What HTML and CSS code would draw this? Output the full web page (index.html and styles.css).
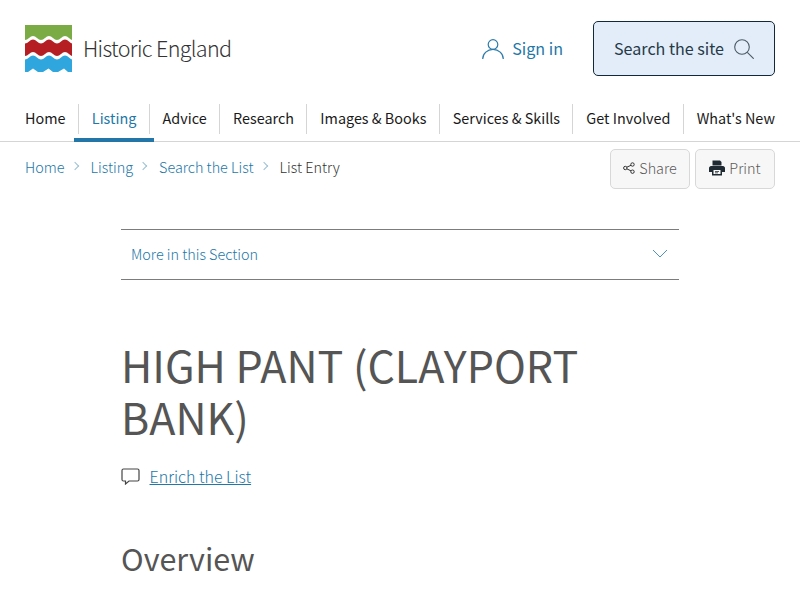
FILE: index.html
```html
<!DOCTYPE html>
<html lang="en">
<head>
<meta charset="utf-8">
<title>HIGH PANT (CLAYPORT BANK) | Historic England</title>
<link rel="stylesheet" href="styles.css">
</head>
<body>
<header class="top">
  <a class="brand" href="#">
    <svg class="logo" viewBox="0 0 47 47" width="47" height="47" aria-hidden="true">
      <path d="M0 0V15q2 0 4-2t4-2 4 2 4 2 4-2 4-2 4 2 4 2 4-2 4-2 4 2 4 2V0Z" fill="#7aab45"/>
      <path d="M0 18.500q2 0 4-2t4-2 4 2 4 2 4-2 4-2 4 2 4 2 4-2 4-2 4 2 4 2V31q-2 0-4-2t-4-2-4 2-4 2-4-2-4-2-4 2-4 2-4-2-4-2-4 2-4 2Z" fill="#b51f24"/>
      <path d="M0 34.500q2 0 4-2t4-2 4 2 4 2 4-2 4-2 4 2 4 2 4-2 4-2 4 2 4 2V47H43L39 43.500 33 47H28L23.500 43.500 18 47H13L8 43.500 3 47H0Z" fill="#2fa6dd"/>
    </svg>
    <span class="brand-name">Historic England</span>
  </a>
  <div class="top-actions">
    <a class="signin" href="#">
      <svg class="user-icon" viewBox="0 0 22 20" width="22" height="20" aria-hidden="true"><circle cx="11" cy="5.500" r="4.800"/><path d="M0.700 20C0.700 14.500 5.500 10.300 11 10.300S21.300 14.500 21.300 20"/></svg>
      <span class="lift">Sign in</span>
    </a>
    <button class="search-btn" type="button">
      <span class="lift">Search the site</span>
      <svg class="search-icon" viewBox="0 0 20 20" width="20" height="20" aria-hidden="true"><circle cx="8" cy="8" r="7.300"/><path d="M13.300 13.300L19.700 19.700"/></svg>
    </button>
  </div>
</header>
<nav class="main-nav">
  <a href="#">Home</a>
  <a class="active" href="#">Listing</a>
  <a href="#">Advice</a>
  <a href="#">Research</a>
  <a href="#">Images &amp; Books</a>
  <a href="#">Services &amp; Skills</a>
  <a href="#">Get Involved</a>
  <a href="#">What's New</a>
</nav>
<div class="crumb-bar">
  <ol class="crumbs">
    <li><a href="#">Home</a></li>
    <li><a href="#">Listing</a></li>
    <li><a href="#">Search the List</a></li>
    <li class="current">List Entry</li>
  </ol>
  <div class="tools">
    <button class="tool" type="button">
      <svg class="share-icon" viewBox="0 0 12 12" width="12" height="12" aria-hidden="true"><circle cx="9.500" cy="2.500" r="1.700"/><circle cx="2.300" cy="6" r="1.700"/><circle cx="9.500" cy="9.700" r="1.700"/><path d="M3.800 5.200L8 3.300M3.800 6.800L8 8.900"/></svg>
      <span class="lift">Share</span>
    </button>
    <button class="tool" type="button">
      <svg class="print-icon" viewBox="0 0 16 16" width="16" height="16" aria-hidden="true"><path d="M3.500 0.500H11L12.500 2V5.500H3.500Z"/><path fill-rule="evenodd" d="M2 6H14C15 6 16 7 16 8V12H13V15.500H3V12H0V8C0 7 1 6 2 6ZM4.500 10V14H11.500V10ZM6 11H10V11.800H6ZM6 12.500H9V13.200H6Z"/></svg>
      <span class="lift">Print</span>
    </button>
  </div>
</div>
<main class="content">
  <button class="section-toggle" type="button">
    <span>More in this Section</span>
    <svg class="chev" viewBox="0 0 16 9" width="16" height="9" aria-hidden="true"><path d="M1 1L8 8L15 1"/></svg>
  </button>
  <h1>HIGH PANT (CLAYPORT BANK)</h1>
  <p class="enrich">
    <svg class="bubble" viewBox="0 0 19 17" width="19" height="17" aria-hidden="true"><path d="M2.500 1H16.500C17.500 1 18 1.500 18 2.500V11.500C18 12.500 17.500 13 16.500 13H8L4.500 16V13H2.500C1.500 13 1 12.500 1 11.500V2.500C1 1.500 1.500 1 2.500 1Z"/></svg>
    <a href="#">Enrich the List</a>
  </p>
  <h2>Overview</h2>
</main>
</body>
</html>
```
FILE: styles.css
```css
* { box-sizing: border-box; }
html, body { height: 100%; overflow: hidden; }
body {
  margin: 0;
  background: #fff;
  color: #505050;
  font-family: "Noto Sans CJK SC", "Noto Sans", sans-serif;
  font-size: 14.4px;
}
a { text-decoration: none; color: inherit; }
button { font: inherit; cursor: pointer; }
.lift { padding-bottom: 2px; }

.top {
  display: flex;
  justify-content: space-between;
  align-items: center;
  padding: 21px 25px 0;
  height: 76px;
}
.brand { display: flex; align-items: center; gap: 11px; }
.logo { display: block; }
.brand-name {
  padding-bottom: 2px;
  font-weight: 300;
  font-size: 21.5px;
  letter-spacing: -0.65px;
  color: #333;
}
.top-actions { display: flex; align-items: center; gap: 30px; }
.signin {
  display: flex;
  align-items: center;
  gap: 8px;
  color: #2277a8;
  font-size: 16.100px;
}
.user-icon { fill: none; stroke: #2d7cab; stroke-width: 1.200; }
.search-btn {
  display: flex;
  align-items: center;
  gap: 10px;
  width: 182px;
  height: 55px;
  padding: 0 20px;
  background: #e2edf9;
  border: 1px solid #12293a;
  border-radius: 5px;
  color: #263a47;
  font-size: 16.100px;
  white-space: nowrap;
}
.search-icon { flex: none; fill: none; stroke: #4a5a66; stroke-width: 1.100; }

.main-nav {
  display: flex;
  justify-content: space-between;
  margin-top: 28px;
  height: 38px;
  padding: 0 25px;
  border-bottom: 1px solid #d5d5d5;
  color: #1a1a1a;
}
.main-nav a {
  position: relative;
  height: 30px;
  line-height: 28px;
  font-size: 14.400px;
}
.main-nav a + a::before {
  content: "";
  position: absolute;
  left: -14px;
  top: 0;
  bottom: 0;
  border-left: 1px solid #d5d5d5;
}
.main-nav a.active { color: #2277a8; }
.main-nav a.active::after {
  content: "";
  position: absolute;
  left: -18px;
  right: -18px;
  top: 34px;
  height: 4px;
  background: #2277a8;
}

.crumb-bar {
  display: flex;
  justify-content: space-between;
  align-items: flex-start;
  padding: 7px 25px 0;
}
.crumbs {
  display: flex;
  list-style: none;
  margin: 0;
  padding: 8px 0 0;
  font-size: 14.400px;
  font-weight: 300;
  line-height: 20px;
  color: #2277a8;
}
.crumbs li + li::before {
  content: "";
  display: inline-block;
  width: 5px;
  height: 5px;
  margin: 0 13px 4px 7px;
  border-top: 1px solid #9bbfd4;
  border-right: 1px solid #9bbfd4;
  transform: rotate(45deg);
}
.crumbs .current { color: #333; }
.tools { display: flex; gap: 5px; }
.tool {
  display: flex;
  align-items: center;
  justify-content: center;
  gap: 4px;
  width: 80px;
  height: 40px;
  padding: 0 0 2px;
  background: #f8f7f7;
  border: 1px solid #d8d8d8;
  border-radius: 5px;
  color: #5a5a5a;
  font-size: 14.400px;
  font-weight: 300;
}
.share-icon { flex: none; fill: none; stroke: #333; stroke-width: 1; }
.print-icon { flex: none; fill: #1f2a33; }

.content { width: 558px; margin: 0 auto; padding-top: 40px; }
.section-toggle {
  display: flex;
  justify-content: space-between;
  align-items: center;
  width: 100%;
  height: 51px;
  padding: 0 11px 2px 10px;
  background: none;
  border: 0;
  border-top: 1px solid #7c7c7c;
  border-bottom: 1px solid #7c7c7c;
  color: #2277a8;
  font-size: 14.400px;
  font-weight: 300;
}
.chev { fill: none; stroke: #4b93c0; stroke-width: 1; }
h1 {
  margin: 58px 0 0;
  font-size: 43px;
  font-weight: 400;
  line-height: 52px;
  color: #555;
}
.enrich {
  display: flex;
  align-items: center;
  gap: 9.500px;
  margin: 22px 0 0;
  font-size: 16px;
  font-weight: 300;
}
.enrich a { color: #2277a8; text-decoration: underline; }
.bubble { fill: none; stroke: #444; stroke-width: 1.200; }
h2 {
  margin: 50px 0 0;
  font-size: 30.500px;
  font-weight: 400;
  line-height: 40px;
  color: #555;
}
```
